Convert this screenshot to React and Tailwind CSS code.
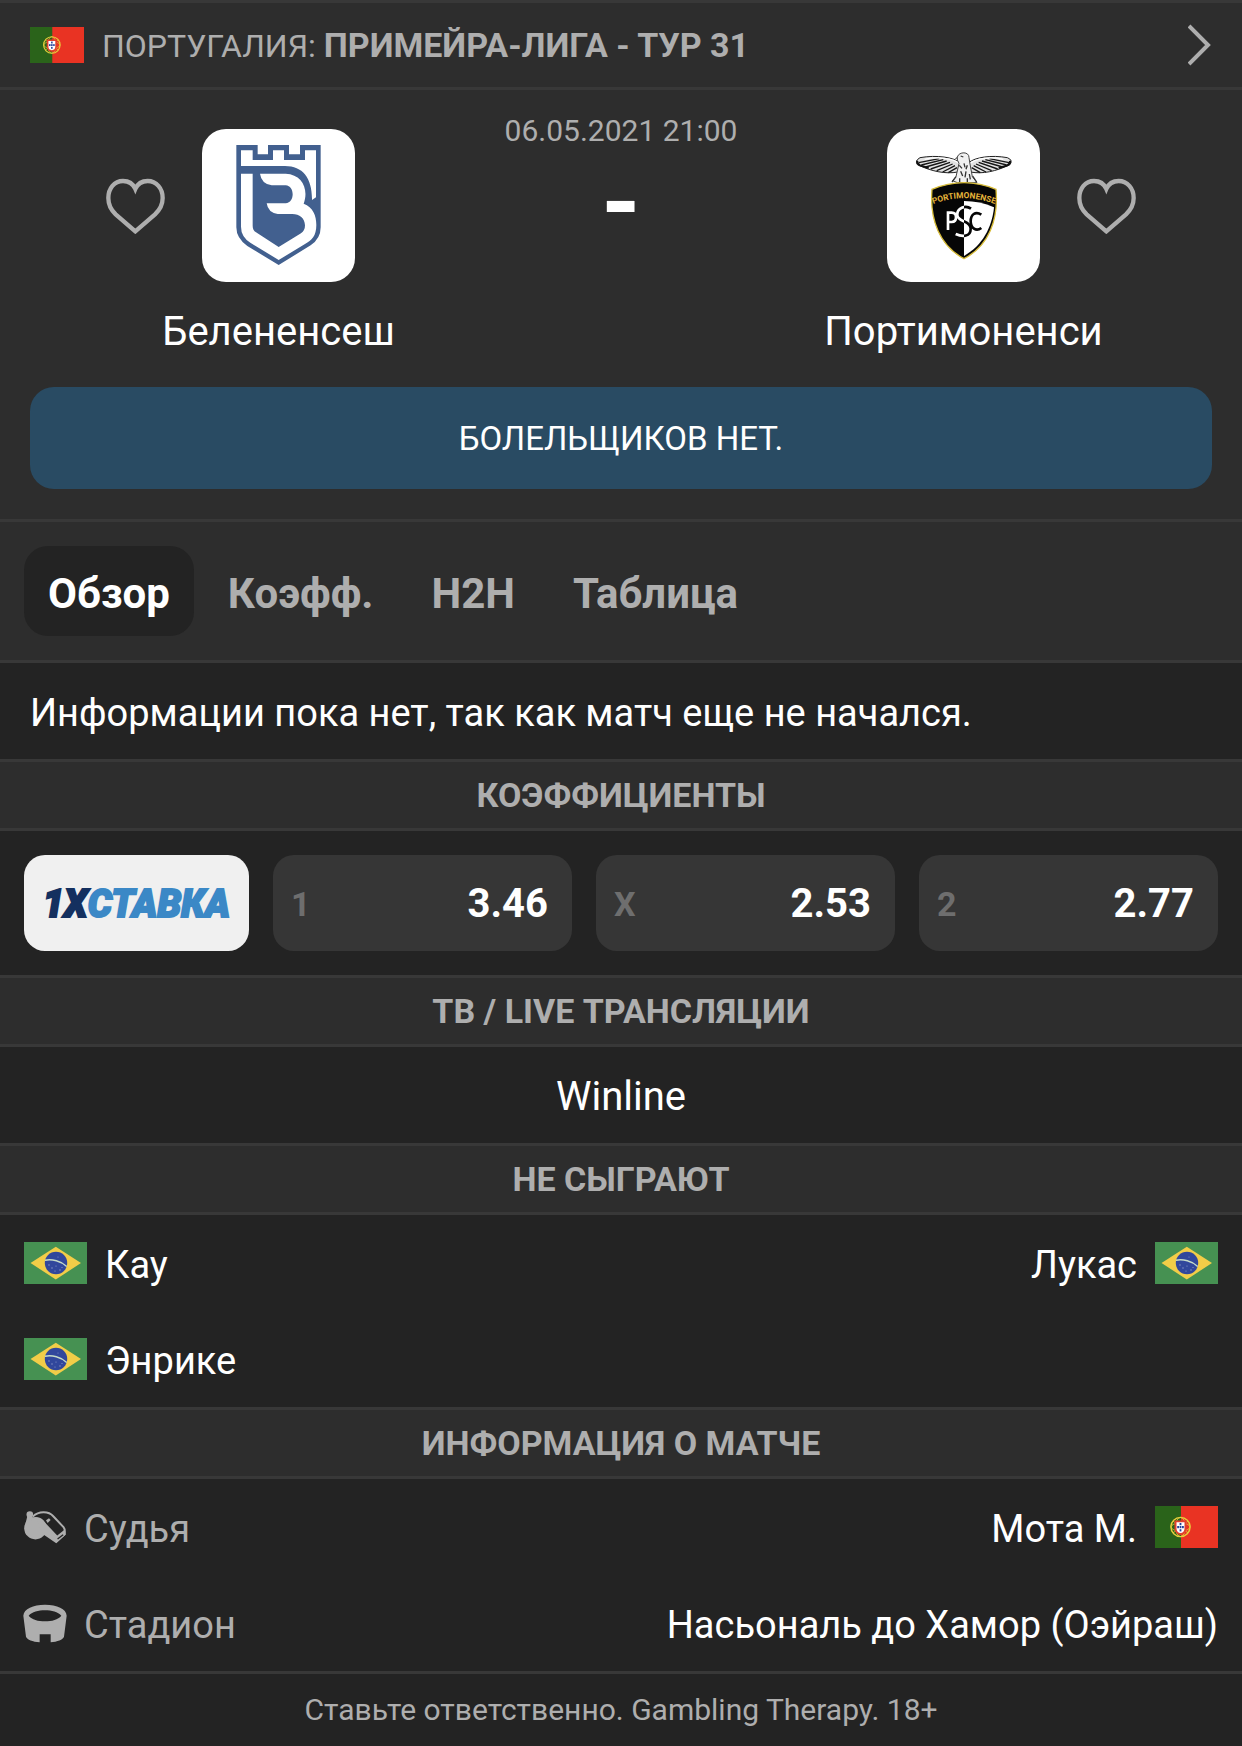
import React from "react";

function PortugalFlag({ className }) {
  return (
    <svg viewBox="0 0 63 42" preserveAspectRatio="none" className={className} role="img" aria-label="Португалия">
      <rect width="63" height="42" fill="#e93323" />
      <rect width="26" height="42" fill="#2a631a" />
      <g fill="none" stroke="#e6cf3c">
        <circle cx="25.5" cy="21" r="9.6" strokeWidth="1.4" />
        <ellipse cx="25.5" cy="21" rx="9.4" ry="4" strokeWidth="0.8" />
        <ellipse cx="25.5" cy="21" rx="5" ry="9.6" strokeWidth="0.8" />
        <path d="M18 15l15 12M18 27l15-12" strokeWidth="0.8" />
      </g>
      <path d="M19.5 14.5h12v8a6 6.500 0 0 1-12 0z" fill="#e0402c" />
      <path d="M21.500 16.200h8v6.300a4 4.500 0 0 1-8 0z" fill="#fff" />
      <g fill="#23439a">
        <rect x="24.600" y="17" width="1.800" height="2.200" />
        <rect x="22.200" y="20" width="1.800" height="2.200" />
        <rect x="24.600" y="20" width="1.800" height="2.200" />
        <rect x="27" y="20" width="1.800" height="2.200" />
        <rect x="24.600" y="23.200" width="1.800" height="2.200" />
      </g>
    </svg>
  );
}

function BrazilFlag() {
  return (
    <svg viewBox="0 0 63 42" className="h-[42px] w-[63px] shrink-0" role="img" aria-label="Бразилия">
      <rect width="63" height="42" fill="#469152" />
      <path d="M6.500 21L31.800 4.800 57 21 31.800 37.500z" fill="#f2cd48" />
      <circle cx="32" cy="21" r="11.200" fill="#31479c" />
      <path d="M21 18.200c7-1.200 16 .5 21.700 6.300" fill="none" stroke="#c6dcc8" strokeWidth="1.400" />
      <g fill="#8d9ccb">
        <circle cx="25" cy="23" r=".7" />
        <circle cx="28" cy="26" r=".7" />
        <circle cx="32" cy="24" r=".6" />
        <circle cx="31" cy="29" r=".6" />
        <circle cx="36" cy="28" r=".7" />
        <circle cx="38" cy="25.500" r=".6" />
        <circle cx="34" cy="15" r=".5" />
      </g>
    </svg>
  );
}

function BelenensesCrest() {
  return (
    <svg viewBox="339 57 459 459" className="size-full" aria-hidden="true">
      <path
        fill="#42608f"
        d="M442 105H506V133H537V105H600V133H633V105H695V352Q695 386 665 406L569 465 475 408Q442 385 442 352Z"
      />
      <path
        fill="#fff"
        d="M456 121H491V150H552V121H585V150H648V121H681V262L669 270C670 205 642 168 588 168H456Z"
      />
      <path
        fill="#fff"
        d="M456 191H491V347Q491 361 501 367L569 411 636 370Q648 362 648 346C647 324 632 312 610 312H566Q537 308 533 280H590C618 278 618 228 590 226H548Q517 221 513 191H590C640 193 660 238 644 281C672 291 682 317 682 345C682 378 668 391 648 402L569 450 484 398Q456 380 456 350Z"
      />
    </svg>
  );
}

function PortimonenseCrest() {
  return (
    <svg viewBox="81 57 459 459" className="size-full" aria-hidden="true">
      <defs>
        <path id="arc" d="M215 284Q312 245 409 284" />
        <clipPath id="leftHalf">
          <rect x="200" y="200" width="112" height="260" />
        </clipPath>
        <clipPath id="rightHalf">
          <rect x="312" y="200" width="120" height="260" />
        </clipPath>
      </defs>
      {/* eagle */}
      <path
        d="M300 158C282 142 230 134 180 143Q164 152 172 164C215 184 255 193 294 186ZM326 158C344 142 395 134 442 143Q460 150 450 164C408 184 368 193 331 186Z"
        fill="#e2e2e2"
        stroke="#222"
        strokeWidth="3"
      />
      <path
        d="M176 158L238 146M184 165L250 149M197 171L260 153M212 177L270 157M230 182L278 162M248 186L285 167M265 188L291 173M447 158L388 146M440 165L376 149M428 171L366 153M413 177L356 157M395 182L348 162M378 186L341 167M361 188L335 173"
        stroke="#161616"
        strokeWidth="4"
      />
      <path d="M172 152Q170 160 180 166L206 174M450 152Q452 160 442 166L416 174" stroke="#111" strokeWidth="6" fill="none" />
      <path d="M194 148C230 139 280 145 298 160M430 148C395 139 347 145 330 160" stroke="#fff" strokeWidth="4" fill="none" />
      <path d="M292 218L278 212 288 200 297 160Q290 150 292 141C297 124 328 124 327 143L330 162 337 200 351 218Z" fill="#f0f0f0" stroke="#444" strokeWidth="3" />
      <path d="M302 138l8 3M298 166l8 9M312 160l3 12M322 166l-4 12M302 184l6 14M318 184l-3 18M328 192l3 16M276 216l12-16M350 216l-12-18M299 205v12M322 205v12" stroke="#333" strokeWidth="4" fill="none" />
      <path d="M291 140l-7 7 9-1z" fill="#666" />
      {/* shield */}
      <path d="M216 238Q312 198 408 238C416 330 386 408 312 446C240 408 208 330 216 238Z" fill="#060606" stroke="#d8bd3a" strokeWidth="4" />
      <path d="M312 273Q360 273 402 292C396 352 368 406 312 438Z" fill="#fff" />
      <text fill="#e6b53a" fontFamily="Roboto" fontWeight="700" fontSize="25" textAnchor="middle">
        <textPath href="#arc" startOffset="50%">PORTIMONENSE</textPath>
      </text>
      <g fill="none" strokeWidth="8">
        <g clipPath="url(#leftHalf)" stroke="#fff">
          <path d="M264 360V308H275Q288 308 288 322T275 336H264" />
          <path d="M333 296C316 284 290 294 292 316C294 336 332 332 332 356C332 380 308 382 287 372" />
        </g>
        <g clipPath="url(#rightHalf)" stroke="#060606">
          <path d="M333 296C316 284 290 294 292 316C294 336 332 332 332 356C332 380 308 382 287 372" />
          <path d="M364 314C346 302 332 314 332 334S348 366 364 354" />
        </g>
      </g>
    </svg>
  );
}

function HeartButton({ label }) {
  return (
    <button type="button" aria-label={label} className="h-[56px] w-[59px] shrink-0">
      <svg viewBox="53 206 177 168" className="size-full" fill="none" stroke="#aeaeae" strokeWidth="13">
        <path d="M141 366L82 315C66 300 60 285 60 266C60 237 78 215 104 215C122 215 134 223 141 239C148 223 160 215 178 215C204 215 223 237 223 266C223 285 216 300 200 315Z" />
      </svg>
    </button>
  );
}

function WhistleIcon() {
  return (
    <svg viewBox="12 16 132 112" className="h-[37px] w-[44px] shrink-0" fill="#aeaeae" aria-hidden="true">
      <circle cx="46" cy="74" r="34" />
      <circle cx="29" cy="33" r="10" />
      <path d="M22 36L40 42 30 54 16 60z" />
      <path d="M46 41Q62 42 72 54L112 96 132 80 137 94 109 120 68 92z" />
      <path d="M38 39C56 22 86 22 100 38L131 71Q135 76 135 84V92L108 116" fill="none" stroke="#aeaeae" strokeWidth="6" />
      <path d="M78 50L87 44 92 49 83 58z" />
      <path d="M113 107L130 94" stroke="#232323" strokeWidth="4" />
    </svg>
  );
}

function StadiumIcon() {
  return (
    <svg viewBox="70 398 132 117" className="h-[39px] w-[44px] shrink-0 overflow-visible" aria-hidden="true">
      <path
        fill="#aeaeae"
        fillRule="evenodd"
        d="M68 433C70 412 97 400 133 400S197 412 198 433L190 496C187 505 170 511 150 513V489H117V513C96 511 79 505 76 496ZM84 433C94 445 112 450 133 450S172 445 182 433C172 422 153 417 133 417S94 422 84 433Z"
      />
    </svg>
  );
}

function SectionTitle({ children }) {
  return (
    <h2 className="border-y-3 border-[#383838] bg-[#2d2d2d] text-center text-[34px]/[66px] font-bold text-[#aeaeae] uppercase">
      {children}
    </h2>
  );
}

function Team({ name, crest, side }) {
  const heart = <HeartButton label={`Добавить в избранное: ${name}`} />;
  return (
    <div>
      <div className="grid grid-cols-[1fr_153px_1fr] items-center gap-[37px]">
        <div className="flex justify-end">{side === "left" && heart}</div>
        <div className="size-[153px] overflow-hidden rounded-3xl bg-white">{crest}</div>
        <div className="flex">{side === "right" && heart}</div>
      </div>
      <div className="mt-6 text-center text-[40px]/[52px] text-white">{name}</div>
    </div>
  );
}

function PlayerRow({ children }) {
  return <li className="flex h-24 items-center gap-[18px]">{children}</li>;
}

const odds = [
  ["1", "3.46"],
  ["X", "2.53"],
  ["2", "2.77"],
];

const tabs = ["Обзор", "Коэфф.", "H2H", "Таблица"];

export default function App() {
  return (
    <main className="min-h-screen bg-[#232323] font-['Roboto',sans-serif] text-[38px] text-white">
      <a href="#league" className="flex h-[90px] items-center border-y-3 border-[#383838] bg-[#2d2d2d] px-[30px] text-[32px] text-[#aeaeae]">
        <PortugalFlag className="h-9 w-[54px] shrink-0" />
        <span className="ml-[18px] flex-1">
          ПОРТУГАЛИЯ: <b className="text-[34px] font-bold">ПРИМЕЙРА-ЛИГА - ТУР 31</b>
        </span>
        <svg viewBox="2 0 24 44" className="h-11 w-6" fill="none" stroke="#aeaeae" strokeWidth="4" aria-hidden="true">
          <path d="M3 3l19 19L3 41" />
        </svg>
      </a>

      <section className="bg-[#2d2d2d] pb-[30px]">
        <div className="grid grid-cols-[1fr_240px_1fr] px-14 pt-[39px]">
          <Team name="Белененсеш" side="left" crest={<BelenensesCrest />} />
          <div className="-mt-5 text-center">
            <time className="block text-[30px]/[44px] whitespace-nowrap text-[#aeaeae]">06.05.2021 21:00</time>
            <div className="mt-5 text-[100px]/[60px] font-bold">-</div>
          </div>
          <Team name="Портимоненси" side="right" crest={<PortimonenseCrest />} />
        </div>
        <button type="button" className="mx-[30px] mt-[29px] block h-[102px] w-[calc(100%-60px)] rounded-3xl bg-[#294b63] pt-0.5 text-[33px] text-white">
          БОЛЕЛЬЩИКОВ НЕТ.
        </button>
      </section>

      <nav className="flex gap-2.5 border-y-3 border-[#383838] bg-[#2d2d2d] px-6 py-6">
        {tabs.map((tab, i) => (
          <button
            type="button"
            key={tab}
            aria-current={i === 0 ? "page" : undefined}
            className={
              i === 0
                ? "h-[90px] rounded-3xl bg-[#232323] px-6 pt-1 text-[42px] font-bold text-white"
                : "h-[90px] rounded-3xl px-6 pt-1 text-[42px] font-bold text-[#aeaeae]"
            }
          >
            {tab}
          </button>
        ))}
      </nav>

      <p className="px-[30px] pt-1 leading-[92px]">Информации пока нет, так как матч еще не начался.</p>

      <SectionTitle>Коэффициенты</SectionTitle>
      <div className="flex gap-6 p-6">
        <a href="#bookmaker" className="flex h-24 w-[225px] shrink-0 items-center justify-center rounded-[21px] bg-[#f0f0f0] pt-0.5 text-[38px] font-black text-[#3b88c6] italic [-webkit-text-stroke:2px_currentColor]">
          <span className="text-[#14305f]">1X</span>СТАВКА
        </a>
        {odds.map(([label, value]) => (
          <button type="button" key={label} className="flex h-24 flex-1 items-center justify-between rounded-[21px] bg-[#363636] pt-0.5 pr-6 pl-[18px] font-bold">
            <span className="text-[34px] text-[#6e6e6e]">{label}</span>
            <span className="text-[40px]">{value}</span>
          </button>
        ))}
      </div>

      <SectionTitle>ТВ / Live трансляции</SectionTitle>
      <p className="pt-1 text-center text-[40px]/[92px]">Winline</p>

      <SectionTitle>Не сыграют</SectionTitle>
      <div className="flex justify-between px-6">
        <ul>
          <PlayerRow>
            <BrazilFlag />
            <span className="pt-1">Кау</span>
          </PlayerRow>
          <PlayerRow>
            <BrazilFlag />
            <span className="pt-1">Энрике</span>
          </PlayerRow>
        </ul>
        <ul>
          <PlayerRow>
            <span className="pt-1">Лукас</span>
            <BrazilFlag />
          </PlayerRow>
        </ul>
      </div>

      <SectionTitle>Информация о матче</SectionTitle>
      <dl className="px-6">
        <div className="flex h-24 items-center justify-between">
          <dt className="flex items-center gap-4 text-[#aeaeae]">
            <WhistleIcon />
            <span className="pt-1">Судья</span>
          </dt>
          <dd className="flex items-center gap-[18px]">
            <span className="pt-1">Мота М.</span>
            <PortugalFlag className="h-[42px] w-[63px] shrink-0" />
          </dd>
        </div>
        <div className="flex h-24 items-center justify-between">
          <dt className="flex items-center gap-4 text-[#aeaeae]">
            <StadiumIcon />
            <span className="pt-1">Стадион</span>
          </dt>
          <dd className="pt-1">Насьональ до Хамор (Оэйраш)</dd>
        </div>
      </dl>

      <footer className="border-t-3 border-[#383838] text-center text-[30px]/[72px] text-[#aeaeae]">
        Ставьте ответственно. Gambling Therapy. 18+
      </footer>
    </main>
  );
}
